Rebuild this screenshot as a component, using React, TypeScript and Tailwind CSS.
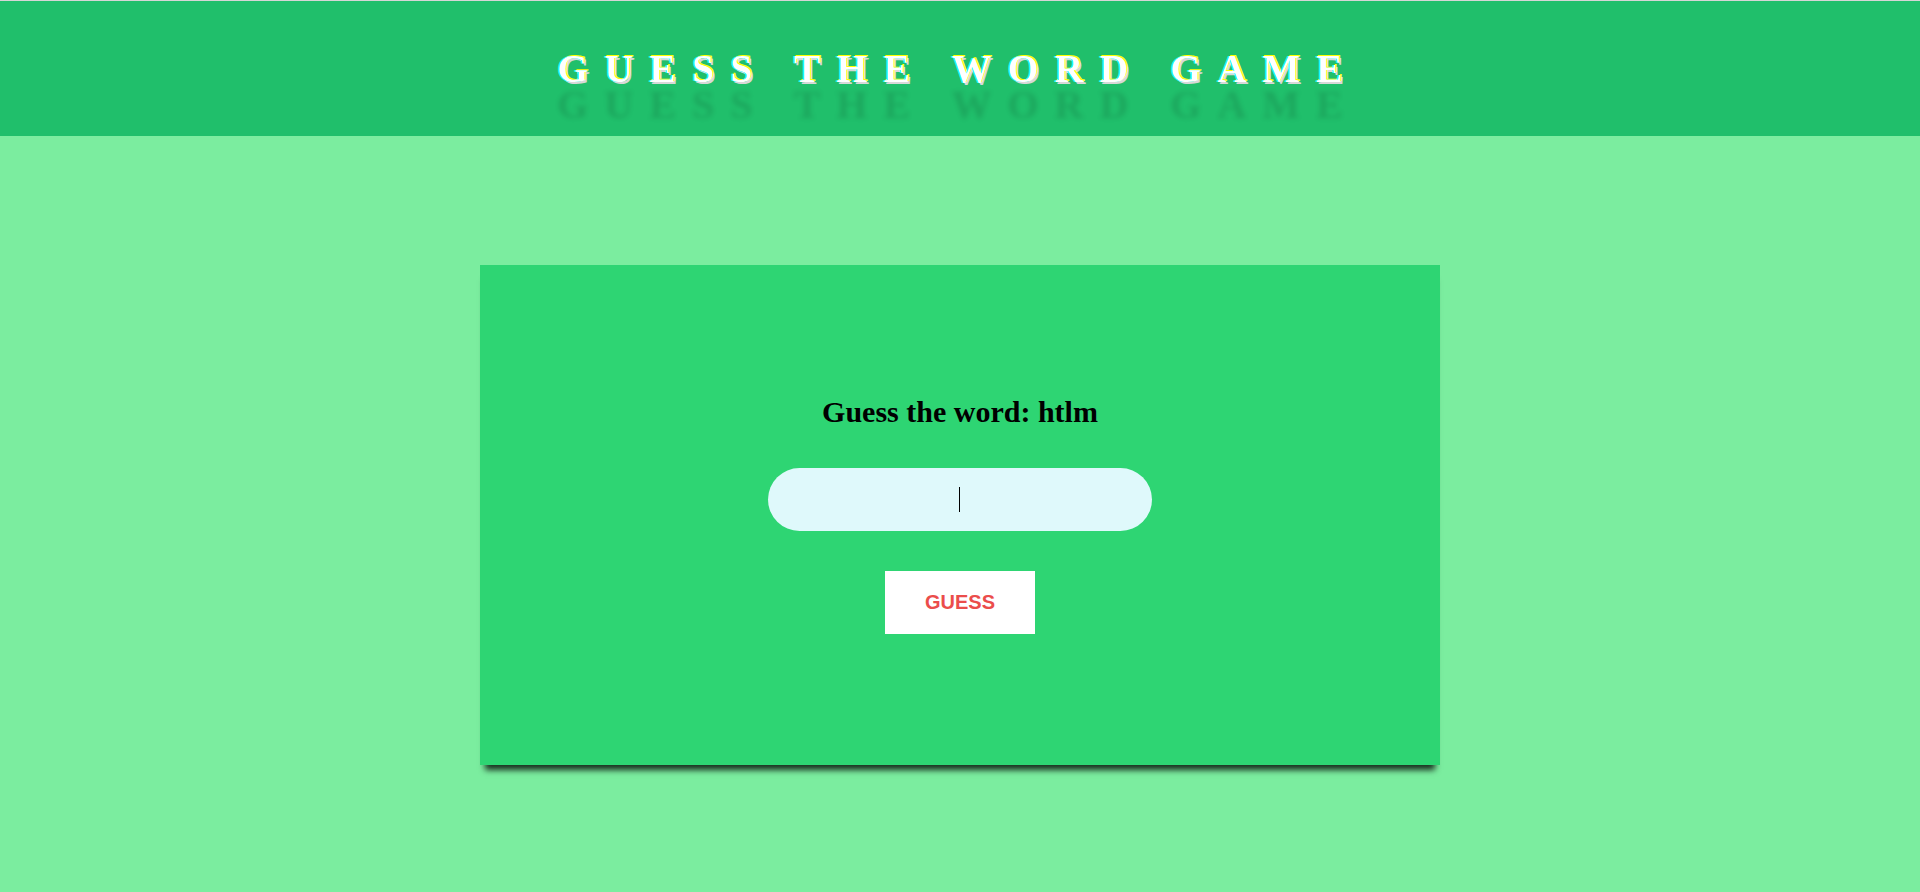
import React, { useState } from 'react';

export default function App() {
    const [guess, setGuess] = useState('');

    return (
        <div className="min-h-[892px] w-full bg-[#7bed9f] font-['Liberation_Serif',serif]">
            <div className="h-px bg-[#d6d6d6]" />
            <header className="h-[135px] bg-[#20bf6b] flex items-center justify-center">
                <h1 className="text-[40px] font-bold text-white tracking-[16px] pr-[4px] [text-shadow:-1px_0_0_#00ffff,1px_-1px_0_#ffff00,2px_2px_0_#d8d8d8,0_36px_5px_rgba(0,0,0,0.12)]">
                    GUESS THE WORD GAME
                </h1>
            </header>
            <main className="flex justify-center pt-[129px]">
                <section className="w-[960px] h-[500px] bg-[#2ed573] shadow-[0_10px_6px_-5px_rgba(0,0,0,0.8)] flex flex-col items-center justify-center">
                    <h2 className="text-[30px] leading-[30px] font-bold text-black">Guess the word: htlm</h2>
                    <div className="relative mt-[41px]">
                        <input
                            value={guess}
                            onChange={(e) => setGuess(e.target.value)}
                            className="w-[384px] h-[63px] rounded-full bg-[#dff9fb] text-center text-[22px] outline-none border-0"
                        />
                        {/* caret of the focused empty field */}
                        {guess === '' && (
                            <span className="absolute left-[191px] top-[19px] w-px h-[25px] bg-black pointer-events-none" />
                        )}
                    </div>
                    <button className="mt-[40px] w-[150px] h-[63px] bg-white text-[#eb4d4b] font-bold text-[20px] font-['Liberation_Sans',sans-serif]">
                        GUESS
                    </button>
                </section>
            </main>
        </div>
    );
}
